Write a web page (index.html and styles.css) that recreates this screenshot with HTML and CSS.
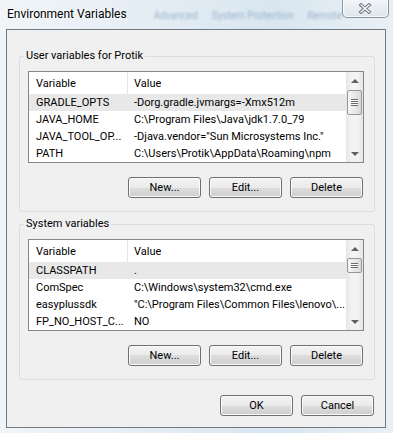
FILE: index.html
```html
<!DOCTYPE html>
<html lang="en">
<head>
    <meta charset="UTF-8">
    <meta name="viewport" content="width=device-width, initial-scale=1.0">
    <title>Environment Variables</title>
    <link rel="stylesheet" href="styles.css">
</head>
<body>
    <div class="frame">
        <div class="titlebar">
            <span class="title">Environment Variables</span>
            <span class="ghost-tabs"><span>Advanced</span><span>System Protection</span><span>Remote</span></span>
            <span class="close">
                <svg width="14" height="11" viewBox="0 0 14 11">
                    <path d="M3 2 L11 9 M11 2 L3 9" stroke="#6c7580" stroke-width="3.4" stroke-linecap="square" fill="none"/>
                    <path d="M3 2 L11 9 M11 2 L3 9" stroke="#fff" stroke-width="1.4" stroke-linecap="square" fill="none"/>
                </svg>
            </span>
        </div>

        <div class="client">
            <fieldset class="group">
                <legend>User variables for Protik</legend>
                <div class="list">
                    <div class="list-body">
                        <div class="list-head"><span class="col-var">Variable</span><span class="col-val">Value</span></div>
                        <div class="row sel"><span class="col-var">GRADLE_OPTS</span><span class="col-val">-Dorg.gradle.jvmargs=-Xmx512m</span></div>
                        <div class="row"><span class="col-var">JAVA_HOME</span><span class="col-val">C:\Program Files\Java\jdk1.7.0_79</span></div>
                        <div class="row"><span class="col-var">JAVA_TOOL_OP...</span><span class="col-val">-Djava.vendor="Sun Microsystems Inc."</span></div>
                        <div class="row"><span class="col-var">PATH</span><span class="col-val">C:\Users\Protik\AppData\Roaming\npm</span></div>
                    </div>
                    <div class="scrollbar">
                        <div class="arrow up"></div>
                        <div class="track"><div class="thumb user-thumb"></div></div>
                        <div class="arrow down"></div>
                    </div>
                </div>
                <div class="buttons">
                    <span class="btn">New...</span>
                    <span class="btn">Edit...</span>
                    <span class="btn">Delete</span>
                </div>
            </fieldset>

            <fieldset class="group system">
                <legend>System variables</legend>
                <div class="list">
                    <div class="list-body">
                        <div class="list-head"><span class="col-var">Variable</span><span class="col-val">Value</span></div>
                        <div class="row sel"><span class="col-var">CLASSPATH</span><span class="col-val">.</span></div>
                        <div class="row"><span class="col-var">ComSpec</span><span class="col-val">C:\Windows\system32\cmd.exe</span></div>
                        <div class="row"><span class="col-var">easyplussdk</span><span class="col-val">"C:\Program Files\Common Files\lenovo\...</span></div>
                        <div class="row"><span class="col-var">FP_NO_HOST_C...</span><span class="col-val">NO</span></div>
                    </div>
                    <div class="scrollbar">
                        <div class="arrow up"></div>
                        <div class="track"><div class="thumb system-thumb"></div></div>
                        <div class="arrow down"></div>
                    </div>
                </div>
                <div class="buttons">
                    <span class="btn">New...</span>
                    <span class="btn">Edit...</span>
                    <span class="btn">Delete</span>
                </div>
            </fieldset>

            <div class="dialog-buttons">
                <span class="btn">OK</span>
                <span class="btn">Cancel</span>
            </div>
        </div>
    </div>
</body>
</html>
```

FILE: styles.css
```css
body {
    margin: 0;
    width: 393px;
    height: 433px;
    overflow: hidden;
    font-family: Roboto, 'Liberation Sans', Arial, sans-serif;
    font-size: 11px;
    color: #000;
    background: #e3ecf3;
}
.frame {
    height: 433px;
    box-sizing: border-box;
    padding: 0 7px 5px 6px;
    display: flex;
    flex-direction: column;
    background: linear-gradient(90deg, #f1f5f8 0%, #e2ebf3 45%, #d9e6f0 70%, #e9f0f5 100%);
}
.titlebar {
    height: 29px;
    flex: none;
    display: flex;
    align-items: flex-start;
}
.title {
    padding: 7px 0 0 1px;
    font-size: 12px;
    line-height: 14px;
    white-space: nowrap;
    text-shadow: 0 0 6px #fff, 0 0 3px #fff;
}
.ghost-tabs {
    flex: 1;
    display: flex;
    gap: 14px;
    margin-left: 27px;
    padding-top: 10px;
    font-size: 10px;
    white-space: nowrap;
    color: rgba(60, 100, 150, 0.4);
    filter: blur(1px);
}
.close {
    flex: none;
    width: 47px;
    height: 19px;
    margin-top: -1px;
    box-sizing: border-box;
    border: 1px solid #8995a1;
    border-top: none;
    border-radius: 0 0 5px 5px;
    background: linear-gradient(#f3f6f9, #dde5ec);
    box-shadow: inset 0 0 0 1px rgba(255, 255, 255, 0.7);
    display: flex;
    align-items: center;
    justify-content: center;
}
.client {
    flex: 1;
    background: #f0f0f0;
    border: 1px solid #6f7a84;
    padding: 19px 10px 0 12px;
    display: flex;
    flex-direction: column;
}
.group {
    margin: 0;
    padding: 8px 10px 13px 4px;
    border: 1px solid #d5dfe5;
    border-radius: 3px;
    min-width: 0;
}
.group.system {
    margin-top: 5px;
}
.group legend {
    padding: 0 2px;
    line-height: 14px;
}
.list {
    margin-left: 4px;
    height: 92px;
    box-sizing: border-box;
    border: 1px solid #828790;
    background: #fff;
    display: flex;
}
.list-body {
    flex: 1;
    min-width: 0;
    overflow: hidden;
}
.list-head, .row {
    display: flex;
    align-items: center;
    white-space: nowrap;
}
.list-head {
    height: 22px;
}
.row {
    height: 17px;
}
.row.sel {
    background: #e8e8e8;
}
.col-var {
    width: 99px;
    flex: none;
    box-sizing: border-box;
    padding-left: 7px;
    border-right: 1px solid transparent;
    overflow: hidden;
}
.list-head .col-var {
    align-self: stretch;
    display: flex;
    align-items: center;
    border-right-color: #e5e5e5;
}
.col-val {
    padding-left: 6px;
    overflow: hidden;
}
.scrollbar {
    width: 17px;
    flex: none;
    display: flex;
    flex-direction: column;
    background: linear-gradient(90deg, #e6e6e6, #f3f3f3 35%, #f3f3f3 65%, #e6e6e6);
}
.arrow {
    height: 17px;
    flex: none;
    display: flex;
    align-items: center;
    justify-content: center;
}
.arrow::before {
    content: "";
    width: 0;
    height: 0;
    border-left: 4px solid transparent;
    border-right: 4px solid transparent;
}
.arrow.up::before {
    border-bottom: 4px solid #606060;
}
.arrow.down::before {
    border-top: 4px solid #606060;
}
.track {
    flex: 1;
}
.thumb {
    margin: 1px 1px 0;
    box-sizing: border-box;
    border: 1px solid #979797;
    border-radius: 2px;
    background: linear-gradient(90deg, #f5f5f5, #e8e8e8 50%, #d8d8d8);
    display: flex;
    align-items: center;
    justify-content: center;
}
.thumb::before {
    content: "";
    width: 7px;
    height: 7px;
    background: repeating-linear-gradient(#6a6a6a 0 1px, #fafafa 1px 2px);
}
.user-thumb {
    height: 25px;
}
.system-thumb {
    height: 15px;
}
.system-thumb::before {
    height: 5px;
}
.buttons, .dialog-buttons {
    display: flex;
    justify-content: flex-end;
    gap: 8px;
    padding-right: 1px;
}
.buttons {
    margin-top: 14px;
}
.dialog-buttons {
    margin-top: 15px;
}
.btn {
    width: 73px;
    height: 21px;
    box-sizing: border-box;
    border: 1px solid #707070;
    border-radius: 3px;
    background: linear-gradient(#f2f2f2 0%, #ebebeb 50%, #dddddd 50%, #cfcfcf 100%);
    box-shadow: inset 0 0 0 1px #fbfbfb;
    display: flex;
    align-items: center;
    justify-content: center;
}
```
